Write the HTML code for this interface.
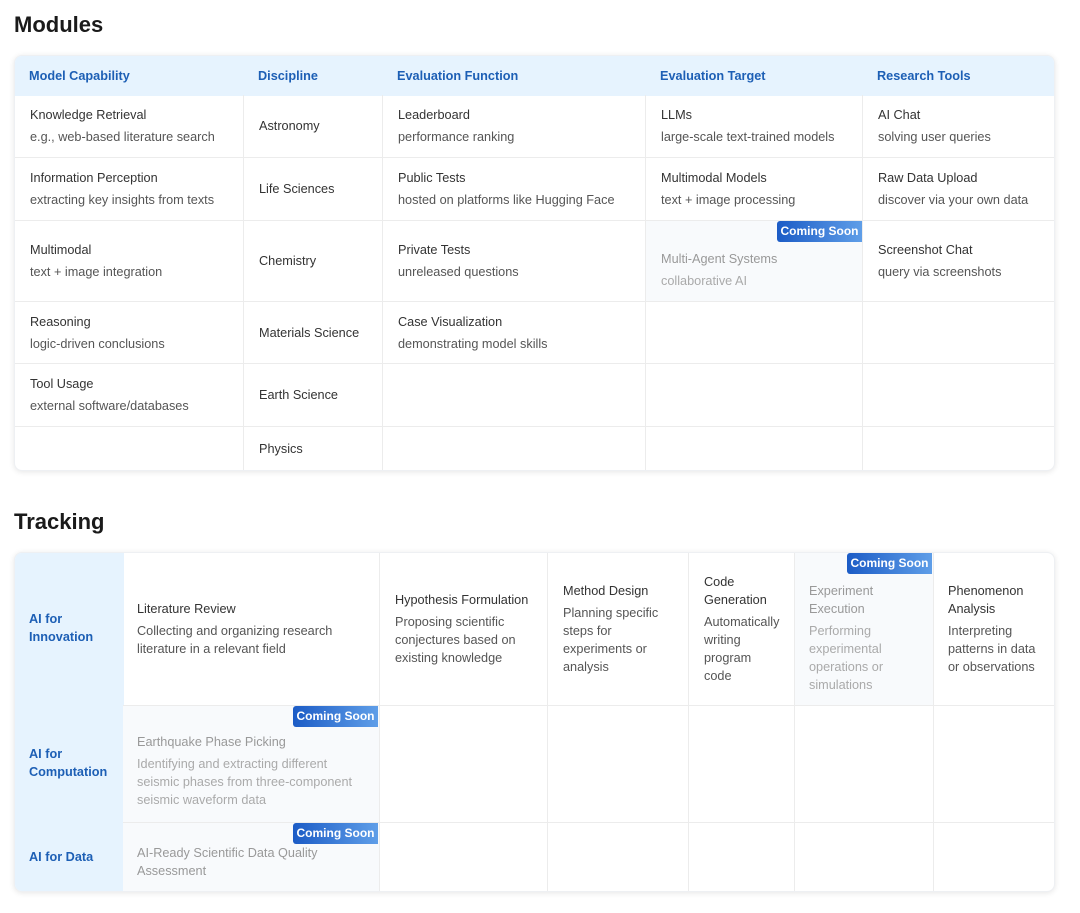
<!DOCTYPE html>
<html><head><meta charset="utf-8"><style>
body{margin:0;width:1080px;height:913px;background:#fff;font-family:"Liberation Sans",Arial,sans-serif;position:relative;overflow:hidden}
h2{position:absolute;left:14px;margin:0;font-size:22px;font-weight:bold;color:#1a1a1a}
.card{position:absolute;left:14px;width:1041px;background:#fff;border-radius:8px;box-shadow:0 1px 6px rgba(0,0,0,.10);border:1px solid #eef0f3;box-sizing:border-box;overflow:hidden}
.c{position:absolute;box-sizing:border-box;border-right:1px solid #ececec;border-bottom:1px solid #ececec;display:flex;flex-direction:column;justify-content:center;padding-left:15px;font-size:12.7px}
.t{color:#333;line-height:22px}
.d{color:#555;line-height:22px}
.h{position:absolute;top:0;height:40px;line-height:40px;font-size:12.7px;font-weight:bold;color:#1d5fb5}
.dim .t{color:#999}.dim .d{color:#aaa}
.dim{background:#f8fafc}
.b{position:absolute;background:linear-gradient(90deg,#1c5cc6,#5f9ee8);color:#fff;font-size:12px;font-weight:bold;width:85px;height:21px;line-height:21px;text-align:center;border-radius:3px 0 0 3px}
.tr .t{line-height:18px;margin-bottom:4px}
.tr .d{line-height:18px}
.lab{position:absolute;left:14px;font-size:12.7px;font-weight:bold;color:#1d5fb5;line-height:18px}
</style></head><body>
<h2 style="top:12px">Modules</h2>
<div class="card" style="top:55px;height:416px">
<div style="position:absolute;left:0;top:0;width:100%;height:40px;background:#e6f3fe"></div>
<div class="h" style="left:14px">Model Capability</div>
<div class="h" style="left:243px">Discipline</div>
<div class="h" style="left:382px">Evaluation Function</div>
<div class="h" style="left:645px">Evaluation Target</div>
<div class="h" style="left:862px">Research Tools</div>
</div>
<div style="position:absolute;left:0;top:0">
<div class="c" style="left:15px;top:95px;width:229px;height:63px"><div class="t">Knowledge Retrieval</div><div class="d">e.g., web-based literature search</div></div>
<div class="c" style="left:15px;top:158px;width:229px;height:63px"><div class="t">Information Perception</div><div class="d">extracting key insights from texts</div></div>
<div class="c" style="left:15px;top:221px;width:229px;height:81px"><div class="t">Multimodal</div><div class="d">text + image integration</div></div>
<div class="c" style="left:15px;top:302px;width:229px;height:62px"><div class="t">Reasoning</div><div class="d">logic-driven conclusions</div></div>
<div class="c" style="left:15px;top:364px;width:229px;height:63px"><div class="t">Tool Usage</div><div class="d">external software/databases</div></div>
<div class="c" style="left:15px;top:427px;width:229px;height:43px;border-bottom:none"></div>
<div class="c" style="left:244px;top:95px;width:139px;height:63px"><div class="t">Astronomy</div></div>
<div class="c" style="left:244px;top:158px;width:139px;height:63px"><div class="t">Life Sciences</div></div>
<div class="c" style="left:244px;top:221px;width:139px;height:81px"><div class="t">Chemistry</div></div>
<div class="c" style="left:244px;top:302px;width:139px;height:62px"><div class="t">Materials Science</div></div>
<div class="c" style="left:244px;top:364px;width:139px;height:63px"><div class="t">Earth Science</div></div>
<div class="c" style="left:244px;top:427px;width:139px;height:43px;border-bottom:none"><div class="t">Physics</div></div>
<div class="c" style="left:383px;top:95px;width:263px;height:63px"><div class="t">Leaderboard</div><div class="d">performance ranking</div></div>
<div class="c" style="left:383px;top:158px;width:263px;height:63px"><div class="t">Public Tests</div><div class="d">hosted on platforms like Hugging Face</div></div>
<div class="c" style="left:383px;top:221px;width:263px;height:81px"><div class="t">Private Tests</div><div class="d">unreleased questions</div></div>
<div class="c" style="left:383px;top:302px;width:263px;height:62px"><div class="t">Case Visualization</div><div class="d">demonstrating model skills</div></div>
<div class="c" style="left:383px;top:364px;width:263px;height:63px"></div>
<div class="c" style="left:383px;top:427px;width:263px;height:43px;border-bottom:none"></div>
<div class="c" style="left:646px;top:95px;width:217px;height:63px"><div class="t">LLMs</div><div class="d">large-scale text-trained models</div></div>
<div class="c" style="left:646px;top:158px;width:217px;height:63px"><div class="t">Multimodal Models</div><div class="d">text + image processing</div></div>
<div class="c dim" style="left:646px;top:221px;width:217px;height:81px;padding-top:18px"><div class="t">Multi-Agent Systems</div><div class="d">collaborative AI</div></div>
<div class="b" style="left:777px;top:221px">Coming Soon</div>
<div class="c" style="left:646px;top:302px;width:217px;height:62px"></div>
<div class="c" style="left:646px;top:364px;width:217px;height:63px"></div>
<div class="c" style="left:646px;top:427px;width:217px;height:43px;border-bottom:none"></div>
<div class="c" style="left:863px;top:95px;width:191px;height:63px;border-right:none"><div class="t">AI Chat</div><div class="d">solving user queries</div></div>
<div class="c" style="left:863px;top:158px;width:191px;height:63px;border-right:none"><div class="t">Raw Data Upload</div><div class="d">discover via your own data</div></div>
<div class="c" style="left:863px;top:221px;width:191px;height:81px;border-right:none"><div class="t">Screenshot Chat</div><div class="d">query via screenshots</div></div>
<div class="c" style="left:863px;top:302px;width:191px;height:62px;border-right:none"></div>
<div class="c" style="left:863px;top:364px;width:191px;height:63px;border-right:none"></div>
</div>

<h2 style="top:509px">Tracking</h2>
<div class="card" style="top:552px;height:340px">
<div style="position:absolute;left:0;top:0;width:109px;height:100%;background:#e6f3fe"></div>
</div>
<div class="tr">
<div class="lab" style="left:29px;top:610px">AI for<br>Innovation</div>
<div class="lab" style="left:29px;top:745px">AI for<br>Computation</div>
<div class="lab" style="left:29px;top:848px">AI for Data</div>

<div class="c" style="left:123px;top:553px;width:257px;height:153px;padding-left:14px"><div class="t">Literature Review</div><div class="d">Collecting and organizing research<br>literature in a relevant field</div></div>
<div class="c" style="left:380px;top:553px;width:168px;height:153px"><div class="t">Hypothesis Formulation</div><div class="d">Proposing scientific<br>conjectures based on<br>existing knowledge</div></div>
<div class="c" style="left:548px;top:553px;width:141px;height:153px"><div class="t">Method Design</div><div class="d">Planning specific<br>steps for<br>experiments or<br>analysis</div></div>
<div class="c" style="left:689px;top:553px;width:106px;height:153px"><div class="t">Code<br>Generation</div><div class="d">Automatically<br>writing<br>program<br>code</div></div>
<div class="c dim" style="left:795px;top:553px;width:139px;height:153px;padding-left:14px;padding-top:18px"><div class="t">Experiment<br>Execution</div><div class="d">Performing<br>experimental<br>operations or<br>simulations</div></div>
<div class="b" style="left:847px;top:553px">Coming Soon</div>
<div class="c" style="left:934px;top:553px;width:120px;height:153px;padding-left:14px;border-right:none"><div class="t">Phenomenon<br>Analysis</div><div class="d">Interpreting<br>patterns in data<br>or observations</div></div>

<div class="c dim" style="left:123px;top:706px;width:257px;height:117px;padding-left:14px;padding-top:14px"><div class="t">Earthquake Phase Picking</div><div class="d">Identifying and extracting different<br>seismic phases from three-component<br>seismic waveform data</div></div>
<div class="b" style="left:293px;top:706px">Coming Soon</div>
<div class="c" style="left:380px;top:706px;width:168px;height:117px"></div>
<div class="c" style="left:548px;top:706px;width:141px;height:117px"></div>
<div class="c" style="left:689px;top:706px;width:106px;height:117px"></div>
<div class="c" style="left:795px;top:706px;width:139px;height:117px"></div>

<div class="c dim" style="left:123px;top:823px;width:257px;height:68px;padding-left:14px;padding-top:10px;border-bottom:none"><div class="t" style="margin-bottom:0">AI-Ready Scientific Data Quality<br>Assessment</div></div>
<div class="b" style="left:293px;top:823px">Coming Soon</div>
<div class="c" style="left:380px;top:823px;width:168px;height:68px;border-bottom:none"></div>
<div class="c" style="left:548px;top:823px;width:141px;height:68px;border-bottom:none"></div>
<div class="c" style="left:689px;top:823px;width:106px;height:68px;border-bottom:none"></div>
<div class="c" style="left:795px;top:823px;width:139px;height:68px;border-bottom:none"></div>
<div class="c" style="left:934px;top:706px;width:120px;height:117px;border-right:none"></div>
</div>
</body></html>
